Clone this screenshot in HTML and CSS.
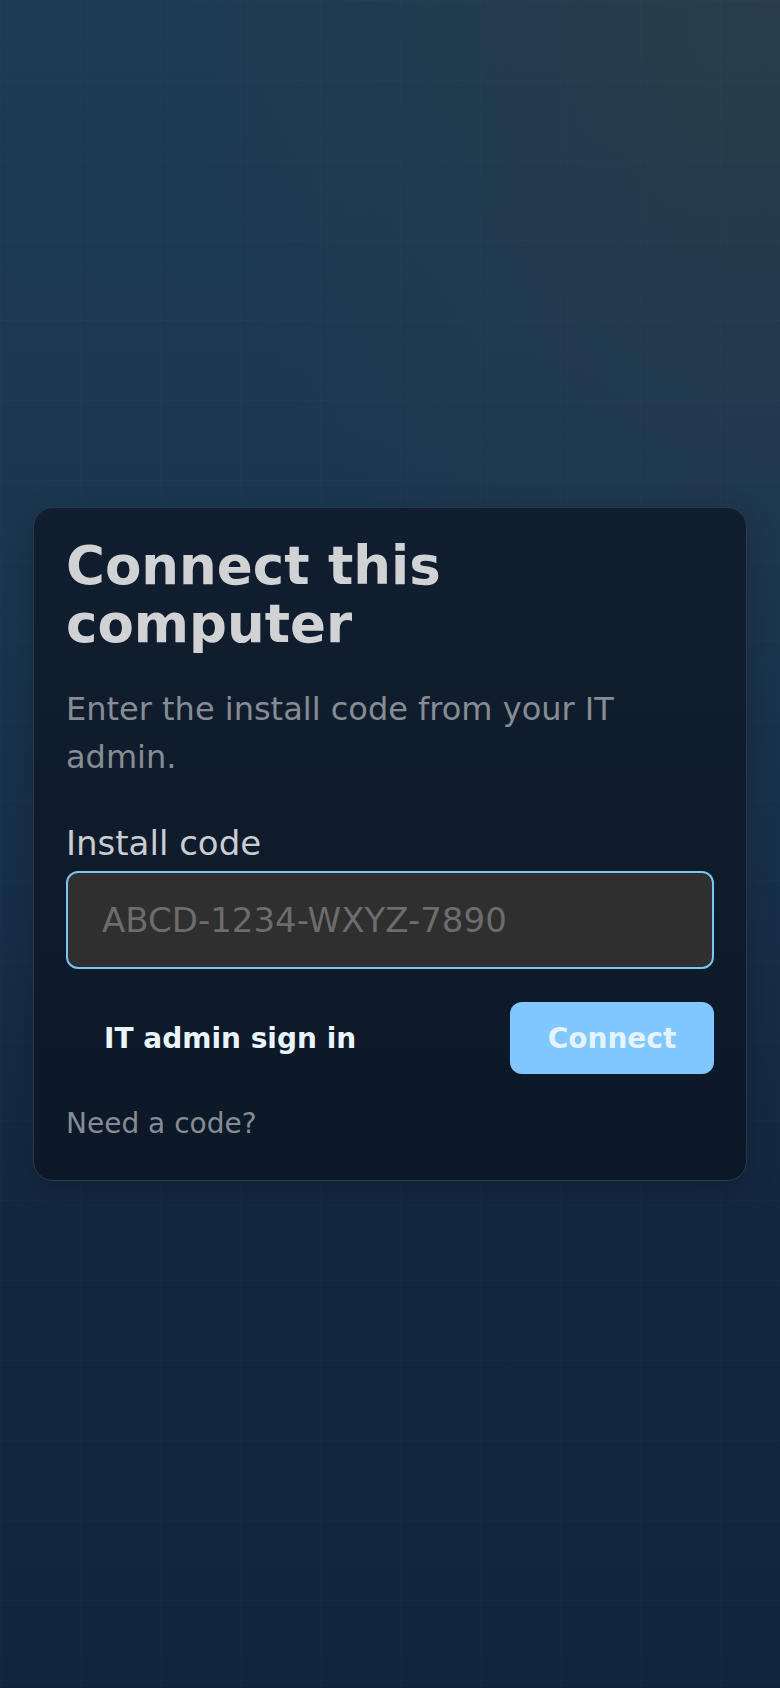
FILE: index.html
```html
<!DOCTYPE html>
<html lang="en">
<head>
<meta charset="utf-8">
<title>Connect this computer</title>
<link rel="stylesheet" href="styles.css">
</head>
<body>
<main class="page">
  <section class="card">
    <h1 class="title">Connect this computer</h1>
    <p class="subtitle">Enter the install code from your IT admin.</p>
    <label class="label" for="code">Install code</label>
    <input class="code-input" id="code" type="text" placeholder="ABCD-1234-WXYZ-7890">
    <div class="actions">
      <button class="btn btn-ghost" type="button">IT admin sign in</button>
      <button class="btn btn-primary" type="button">Connect</button>
    </div>
    <a class="help-link" href="#">Need a code?</a>
  </section>
</main>
</body>
</html>
```

FILE: styles.css
```css
* {
  box-sizing: border-box;
}

html, body {
  margin: 0;
  padding: 0;
}

body {
  font-family: "DejaVu Sans", "Noto Sans", sans-serif;
  min-height: 100vh;
  background-color: #13263f;
  background-image:
    linear-gradient(rgba(255, 255, 255, 0.01) 1px, transparent 1px),
    linear-gradient(90deg, rgba(255, 255, 255, 0.01) 1px, transparent 1px),
    radial-gradient(ellipse 75% 42% at 100% 0%, rgba(48, 62, 68, 0.6), rgba(48, 62, 68, 0) 100%),
    linear-gradient(180deg, #1d3b53 0%, #1c3851 25%, #173049 50%, #13273f 72%, #12253e 100%);
  background-size: 80px 80px, 80px 80px, 100% 100%, 100% 100%;
}

.page {
  min-height: 100vh;
  display: flex;
  align-items: center;
  justify-content: center;
  padding: 0 33px;
}

.card {
  width: 100%;
  border: 1px solid #2a394b;
  border-radius: 20px;
  background: linear-gradient(180deg, #111e2f 0%, #0f1b2b 60%, #0c1828 100%);
  padding: 29px 32px 35px;
  box-shadow: 0 8px 30px rgba(0, 0, 0, 0.18);
}

.title {
  margin: 0 0 32px;
  font-size: 53px;
  line-height: 58px;
  font-weight: 700;
  color: #d1d2d4;
}

.subtitle {
  margin: 0;
  font-size: 32px;
  line-height: 48px;
  color: #878c93;
}

.label {
  display: block;
  margin-top: 42px;
  margin-bottom: 8px;
  font-size: 34px;
  line-height: normal;
  color: #c9ccd0;
}

.code-input {
  display: block;
  width: 100%;
  height: 98px;
  padding: 0 34px;
  border: 2px solid #7ac3f4;
  border-radius: 12px;
  background: #2f2f2f;
  color: #e0e0e0;
  font-family: "DejaVu Sans", sans-serif;
  font-size: 34px;
  outline: none;
}

.code-input::placeholder {
  color: #6c6c6c;
}

.actions {
  margin-top: 33px;
  display: flex;
  justify-content: space-between;
  align-items: center;
}

.btn {
  height: 72px;
  padding: 0 38px;
  border: none;
  border-radius: 12px;
  font-family: "DejaVu Sans", sans-serif;
  font-size: 28px;
  font-weight: 700;
  cursor: pointer;
}

.btn-ghost {
  background: transparent;
  color: #e8f4fe;
}

.btn-primary {
  width: 204px;
  padding: 0;
  background: #80c8ff;
  color: #e7f3fc;
}

.help-link {
  display: block;
  margin-top: 29px;
  font-size: 28px;
  line-height: 42px;
  color: #878c93;
  text-decoration: none;
}
```
